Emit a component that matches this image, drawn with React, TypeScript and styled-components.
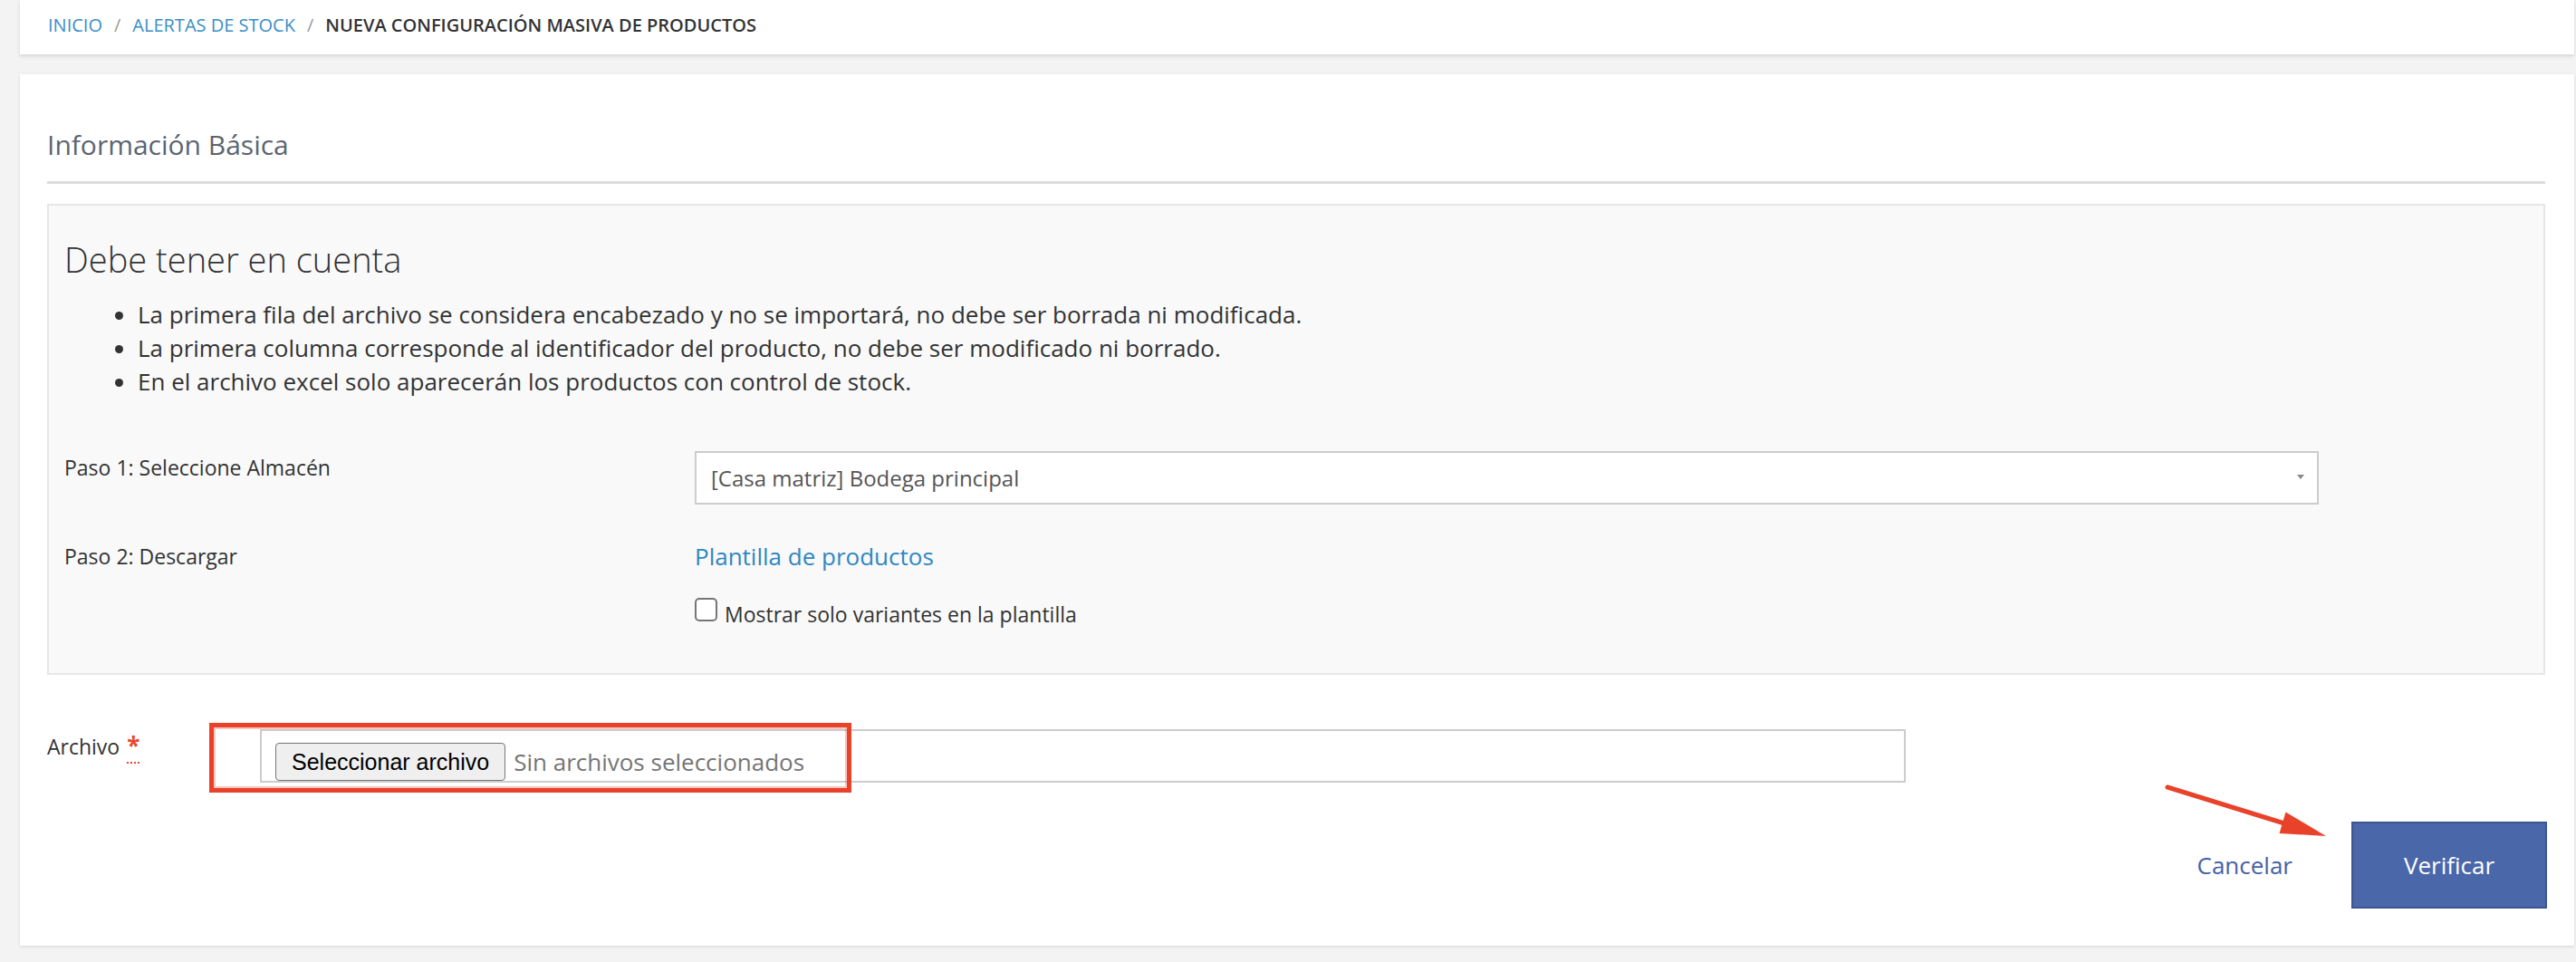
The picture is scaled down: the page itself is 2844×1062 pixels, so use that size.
import React from 'react'
import styled, { createGlobalStyle } from 'styled-components'

const GlobalStyle = createGlobalStyle`
  html, body {
    margin: 0;
    padding: 0;
    background: #f3f3f3;
  }
  body {
    font-family: 'Open Sans', 'Noto Sans', sans-serif;
    color: #333;
  }
  * {
    box-sizing: border-box;
  }
`

const Page = styled.div`
  position: relative;
  width: 2844px;
  height: 1062px;
  padding: 0 2px 0 22px;
  overflow: hidden;
`

const Breadcrumb = styled.nav`
  height: 60px;
  background: #fff;
  box-shadow: 0 2px 4px rgba(0, 0, 0, 0.12);
  padding-left: 31px;
  font-size: 20px;
  line-height: 56px;
  text-transform: uppercase;
  white-space: nowrap;
`

const Crumb = styled.a`
  color: #3a8ec6;
  text-decoration: none;
`

const CrumbSeparator = styled.span`
  color: #9a9a9a;
  margin: 0 13px;
`

const CrumbCurrent = styled.span`
  color: #333;
  font-weight: 600;
`

const Card = styled.section`
  margin-top: 22px;
  background: #fff;
  box-shadow: 0 1px 3px rgba(0, 0, 0, 0.12);
  padding: 58px 32px 41px 30px;
`

const CardTitle = styled.h2`
  margin: 0;
  font-size: 30px;
  font-weight: 400;
  line-height: 40px;
  color: #5d6470;
  padding-bottom: 20px;
  border-bottom: 3px solid #dcdcdc;
`

const Notice = styled.div`
  margin-top: 22px;
  background: #f9f9f9;
  border: 2px solid #e6e6e6;
  padding: 37px 17px 48px 17px;
`

const NoticeTitle = styled.h3`
  margin: 0;
  font-size: 38px;
  font-weight: 300;
  line-height: 44px;
  color: #333;
`

const NoticeList = styled.ul`
  margin: 21px 0 0;
  padding-left: 81px;
  font-size: 26px;
  line-height: 37px;
  color: #333;
`

const FormRow = styled.div<{ $gap: number }>`
  display: grid;
  grid-template-columns: 696px 1793px;
  align-items: start;
  margin-top: ${(p) => p.$gap}px;
`

const FieldLabel = styled.div`
  font-size: 23px;
  line-height: 37px;
  color: #333;
`

const Select = styled.div`
  height: 59px;
  background: #fff;
  border: 2px solid #cccccc;
  padding: 0 14px 0 16px;
  display: flex;
  align-items: center;
  justify-content: space-between;
  font-size: 24px;
  color: #555;
`

const SelectArrow = styled.span`
  width: 0;
  height: 0;
  border-left: 4px solid transparent;
  border-right: 4px solid transparent;
  border-top: 5px solid #888;
  margin-top: -2px;
`

const TemplateLink = styled.a`
  display: block;
  font-size: 26px;
  line-height: 37px;
  color: #2f87c1;
  text-decoration: none;
`

const CheckRow = styled.label`
  display: flex;
  align-items: flex-start;
  gap: 8px;
  margin-top: 28px;
  font-size: 23px;
  line-height: 34px;
  color: #333;
`

const CheckBox = styled.span`
  width: 25px;
  height: 26px;
  margin-top: -1px;
  background: #fff;
  border: 2px solid #767676;
  border-radius: 5px;
  flex-shrink: 0;
`

const FileRow = styled.div`
  position: relative;
  display: grid;
  grid-template-columns: 235px 1817px;
  align-items: start;
  margin-top: 60px;
`

const Required = styled.abbr`
  margin-left: 8px;
  color: #e9482d;
  font-size: 26px;
  font-weight: 700;
  text-decoration: none;
  border-bottom: 2px dotted #e9482d;
`

const FileField = styled.div`
  height: 59px;
  background: #fff;
  border: 2px solid #cccccc;
  padding: 13px 15px 0;
  display: flex;
  align-items: flex-start;
`

const FileButton = styled.span`
  height: 42px;
  padding: 0 17px;
  border: 1px solid #767676;
  border-radius: 4px;
  background: #efefef;
  font-family: 'Liberation Sans', Arial, sans-serif;
  font-size: 25px;
  line-height: 40px;
  color: #000;
  white-space: nowrap;
`

const FileStatus = styled.span`
  margin-left: 9px;
  font-size: 26px;
  line-height: 42px;
  color: #757575;
  white-space: nowrap;
`

const Highlight = styled.div`
  position: absolute;
  left: 179px;
  top: -7px;
  width: 709px;
  height: 77px;
  border: 5px solid #e8432a;
  box-shadow: inset 0 0 0 2px rgba(232, 67, 42, 0.3);
  pointer-events: none;
`

const Actions = styled.div`
  display: flex;
  justify-content: flex-end;
  align-items: center;
  gap: 65px;
  margin-top: 43px;
  margin-right: -2px;
`

const CancelLink = styled.a`
  font-size: 26px;
  color: #4661a6;
  text-decoration: none;
`

const PrimaryButton = styled.button`
  width: 216px;
  height: 96px;
  background: #4a67aa;
  border: 2px solid #3c5592;
  color: #fff;
  font-family: 'Open Sans', sans-serif;
  font-size: 26px;
  padding: 0;
`

const Arrow = styled.svg`
  position: absolute;
  left: 2380px;
  top: 855px;
  pointer-events: none;
`

const App = () => {
  return (
    <>
      <GlobalStyle />
      <Page>
        <Breadcrumb>
          <Crumb href="#">Inicio</Crumb>
          <CrumbSeparator>/</CrumbSeparator>
          <Crumb href="#">Alertas de stock</Crumb>
          <CrumbSeparator>/</CrumbSeparator>
          <CrumbCurrent>Nueva configuración masiva de productos</CrumbCurrent>
        </Breadcrumb>

        <Card>
          <CardTitle>Información Básica</CardTitle>

          <Notice>
            <NoticeTitle>Debe tener en cuenta</NoticeTitle>
            <NoticeList>
              <li>La primera fila del archivo se considera encabezado y no se importará, no debe ser borrada ni modificada.</li>
              <li>La primera columna corresponde al identificador del producto, no debe ser modificado ni borrado.</li>
              <li>En el archivo excel solo aparecerán los productos con control de stock.</li>
            </NoticeList>

            <FormRow $gap={58}>
              <FieldLabel>Paso 1: Seleccione Almacén</FieldLabel>
              <Select>
                <span>[Casa matriz] Bodega principal</span>
                <SelectArrow />
              </Select>
            </FormRow>

            <FormRow $gap={39}>
              <FieldLabel>Paso 2: Descargar</FieldLabel>
              <div>
                <TemplateLink href="#">Plantilla de productos</TemplateLink>
                <CheckRow>
                  <CheckBox />
                  Mostrar solo variantes en la plantilla
                </CheckRow>
              </div>
            </FormRow>
          </Notice>

          <FileRow>
            <FieldLabel>
              Archivo<Required title="requerido">*</Required>
            </FieldLabel>
            <FileField>
              <FileButton>Seleccionar archivo</FileButton>
              <FileStatus>Sin archivos seleccionados</FileStatus>
            </FileField>
            <Highlight />
          </FileRow>

          <Actions>
            <CancelLink href="#">Cancelar</CancelLink>
            <PrimaryButton>Verificar</PrimaryButton>
          </Actions>
        </Card>

        <Arrow width="200" height="80" viewBox="0 0 200 80">
          <line x1="13" y1="14" x2="142" y2="54" stroke="#e8432a" strokeWidth="5" strokeLinecap="round" />
          <polygon points="188,68 143.5,41.5 136.5,65" fill="#e8432a" />
        </Arrow>
      </Page>
    </>
  )
}

export default App
